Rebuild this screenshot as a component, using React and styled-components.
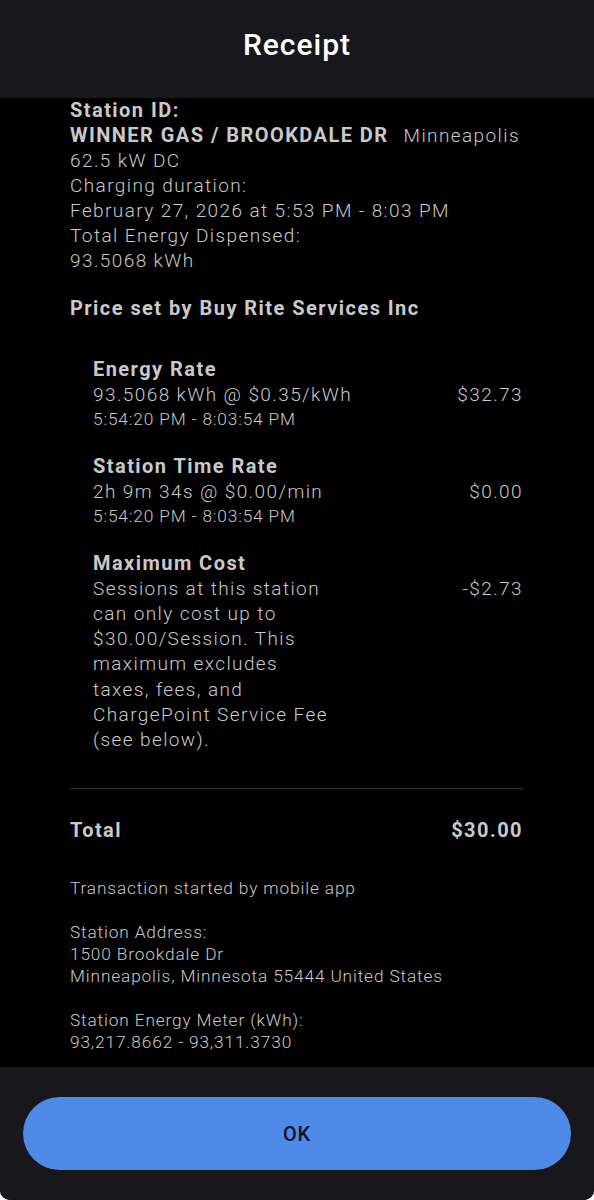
import React from "react";
import styled, { createGlobalStyle } from "styled-components";

const GlobalStyle = createGlobalStyle`
  html, body {
    margin: 0;
    padding: 0;
    background: #ffffff;
  }
  * {
    box-sizing: border-box;
  }
`;

const Screen = styled.div`
  width: 594px;
  height: 1200px;
  display: flex;
  flex-direction: column;
  font-family: Roboto, "Liberation Sans", sans-serif;
  background: #000;
  overflow: hidden;
  border-radius: 0 0 10px 10px;
`;

const Header = styled.header`
  height: 98px;
  flex-shrink: 0;
  background: #17171c;
  display: flex;
  align-items: center;
  justify-content: center;
`;

const Title = styled.h1`
  margin: 0 0 10px;
  color: #fff;
  font-size: 30px;
  font-weight: 500;
  letter-spacing: 1px;
`;

const Body = styled.main`
  flex: 1;
  overflow: hidden;
  background: #000;
  padding: 0 71px 0 70px;
  color: #c9c9c9;
`;

const Line = styled.div`
  font-size: ${(p) => (p.bold ? 20 : 19)}px;
  line-height: 25px;
  font-weight: ${(p) => (p.bold ? 700 : 300)};
  letter-spacing: ${(p) => (p.bold ? "1.45px" : "1.4px")};
  margin-top: ${(p) => p.gap || 0}px;
  white-space: nowrap;
`;

const Muted = styled.span`
  font-size: 19px;
  font-weight: 300;
  letter-spacing: 1.4px;
  margin-left: 15px;
`;

const Charges = styled.div`
  padding-left: 23px;
  margin-top: 36px;
  display: flex;
  flex-direction: column;
  gap: 22px;
`;

const Charge = styled.div`
  display: flex;
  flex-direction: column;
`;

const ChargeRow = styled.div`
  display: flex;
  justify-content: space-between;
  align-items: flex-start;
`;

const ChargeText = styled.div`
  font-size: 19px;
  line-height: 25.1px;
  font-weight: 300;
  letter-spacing: 1.4px;
  max-width: ${(p) => (p.narrow ? "240px" : "none")};
`;

const Amount = styled.div`
  font-size: 19px;
  line-height: 25px;
  font-weight: 300;
  letter-spacing: 1.4px;
  white-space: nowrap;
`;

const TimeSpan = styled.div`
  font-size: 17.3px;
  line-height: 25px;
  font-weight: 300;
  letter-spacing: 0.85px;
`;

const Divider = styled.hr`
  border: none;
  border-top: 1px solid #303033;
  margin: 36px 0 0;
`;

const TotalRow = styled.div`
  display: flex;
  justify-content: space-between;
  margin-top: 29px;
  font-size: 20px;
  line-height: 25px;
  font-weight: 700;
  letter-spacing: 1.45px;
`;

const Note = styled.div`
  margin-top: ${(p) => p.gap || 0}px;
  font-size: 17.3px;
  line-height: 22px;
  font-weight: 300;
  letter-spacing: 0.85px;
`;

const Footer = styled.footer`
  height: 133px;
  flex-shrink: 0;
  background: #17171c;
  padding: 30px 23px 0 23px;
`;

const OkButton = styled.button`
  width: 100%;
  height: 73px;
  border: none;
  border-radius: 37px;
  background: #4f8ae9;
  color: #0e1320;
  font-family: Roboto, "Liberation Sans", sans-serif;
  font-size: 20px;
  font-weight: 500;
  letter-spacing: 0.8px;
  cursor: pointer;
`;

const charges = [
  {
    title: "Energy Rate",
    text: "93.5068 kWh @ $0.35/kWh",
    amount: "$32.73",
    time: "5:54:20 PM - 8:03:54 PM",
  },
  {
    title: "Station Time Rate",
    text: "2h 9m 34s @ $0.00/min",
    amount: "$0.00",
    time: "5:54:20 PM - 8:03:54 PM",
  },
  {
    title: "Maximum Cost",
    text: "Sessions at this station can only cost up to $30.00/Session. This maximum excludes taxes, fees, and ChargePoint Service Fee (see below).",
    amount: "-$2.73",
    narrow: true,
  },
];

export default function App() {
  return (
    <>
      <GlobalStyle />
      <Screen>
        <Header>
          <Title>Receipt</Title>
        </Header>
        <Body>
          <Line bold>Station ID:</Line>
          <Line bold>
            WINNER GAS / BROOKDALE DR<Muted>Minneapolis</Muted>
          </Line>
          <Line>62.5 kW DC</Line>
          <Line>Charging duration:</Line>
          <Line>February 27, 2026 at 5:53 PM - 8:03 PM</Line>
          <Line>Total Energy Dispensed:</Line>
          <Line>93.5068 kWh</Line>
          <Line bold gap={23}>
            Price set by Buy Rite Services Inc
          </Line>

          <Charges>
            {charges.map((c) => (
              <Charge key={c.title}>
                <Line bold>{c.title}</Line>
                <ChargeRow>
                  <ChargeText narrow={c.narrow}>{c.text}</ChargeText>
                  <Amount>{c.amount}</Amount>
                </ChargeRow>
                {c.time && <TimeSpan>{c.time}</TimeSpan>}
              </Charge>
            ))}
          </Charges>

          <Divider />
          <TotalRow>
            <span>Total</span>
            <span>$30.00</span>
          </TotalRow>

          <Note gap={34}>Transaction started by mobile app</Note>
          <Note gap={22}>Station Address:</Note>
          <Note>1500 Brookdale Dr</Note>
          <Note>Minneapolis, Minnesota 55444 United States</Note>
          <Note gap={22}>Station Energy Meter (kWh):</Note>
          <Note>93,217.8662 - 93,311.3730</Note>
        </Body>
        <Footer>
          <OkButton>OK</OkButton>
        </Footer>
      </Screen>
    </>
  );
}
